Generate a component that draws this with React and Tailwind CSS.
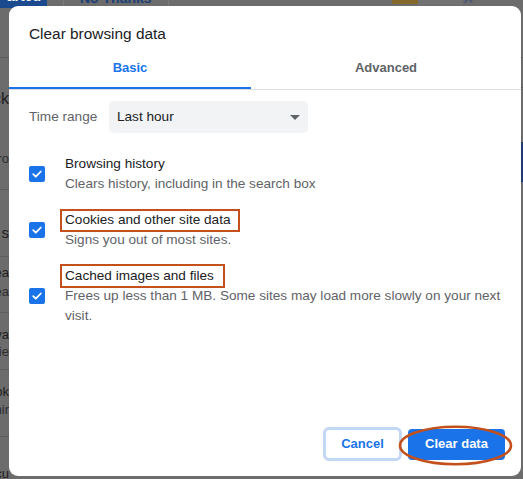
import React from "react";

function Clip({ children, className = "" }) {
  return (
    <div className={"flex justify-end overflow-hidden whitespace-nowrap " + className}>
      <span>{children}</span>
    </div>
  );
}

function Check() {
  return (
    <div className="w-[16px] h-[16px] shrink-0 rounded-[2px] bg-[#1a73e8] flex items-center justify-center">
      <svg width="12" height="12" viewBox="0 0 12 12" fill="none">
        <path d="M2.2 6.2 L4.8 8.7 L9.8 3.5" stroke="white" strokeWidth="1.8" strokeLinecap="round" strokeLinejoin="round" />
      </svg>
    </div>
  );
}

function Row({ title, children, box }) {
  return (
    <div className="flex items-center gap-[20px]">
      <Check />
      <div className="flex flex-col text-[13.6px] leading-[20px] whitespace-nowrap">
        <div className="text-[#202124]">
          <span className="relative inline-block">
            {title}
            {box}
          </span>
        </div>
        <div className="text-[#5f6368]">{children}</div>
      </div>
    </div>
  );
}

export default function App() {
  return (
    <div className="relative w-[523px] h-[479px] overflow-hidden bg-[#6c6c6c] font-['Liberation_Sans',Arial,sans-serif]">
      {/* background page (dimmed) */}
      <div className="flex flex-col w-full h-full">
        <div className="h-[58px] shrink-0 border-b border-[#5c5c5c] flex items-start">
          <div className="w-[47px] h-[22px] -mt-[14px] bg-[#1b4a8e] text-white text-[14px] font-bold flex justify-end overflow-hidden pr-[6px]">
            arted
          </div>
          <div className="w-px h-[20px] -mt-[10px] bg-[#7a7a7a] ml-[16px]" />
          <div className="-mt-[12px] ml-[16px] text-[#1c3f78] text-[14px] font-bold">No Thanks</div>
          <div className="w-px h-[20px] -mt-[10px] bg-[#7a7a7a] ml-[16px]" />
          <div className="flex-1" />
          <div className="w-[26px] h-[4px] bg-[#86692a]" />
          <div className="w-[44px] h-[5px] bg-[#727272]" />
          <div className="-mt-[12px] text-[#3f5777] text-[15px] mr-[48px]">✕</div>
        </div>
        <div className="flex flex-1">
          <div className="w-[9px] flex flex-col text-[13px] text-[#1e1e1e]">
            <div className="h-[132px] border-b border-[#5e5e5e] flex flex-col pt-[32px] gap-[42px] leading-[18px]">
              <Clip className="text-[16px]">Back</Clip>
              <Clip className="text-[#2e2e2e]">Pro</Clip>
            </div>
            <div className="h-[67px] border-b border-[#5e5e5e] pt-[34px] leading-[18px]">
              <Clip className="text-[15px]">All s</Clip>
            </div>
            <div className="h-[56px] border-b border-[#5e5e5e] pt-[6px] leading-[19px]">
              <Clip>Sea</Clip>
              <Clip className="text-[#2e2e2e]">Sea</Clip>
            </div>
            <div className="h-[57px] border-b border-[#5e5e5e] pt-[13px] leading-[17px]">
              <Clip>Priva</Clip>
              <Clip className="text-[#2e2e2e]">Revie</Clip>
            </div>
            <div className="h-[67px] border-b border-[#5e5e5e] pt-[13px] leading-[18px]">
              <Clip>Cook</Clip>
              <Clip className="text-[#2e2e2e]">Thir</Clip>
            </div>
            <div className="flex-1 pt-[28px] leading-[18px]">
              <Clip>Secu</Clip>
            </div>
          </div>
          <div className="flex-1" />
          <div className="w-[2px] flex flex-col">
            <div className="h-[30px] border-b border-[#555]" />
            <div className="h-[54px]" />
            <div className="h-[40px] bg-[#1d3d6e]" />
          </div>
        </div>
        <div className="h-[3px] bg-[#4a4a4a]" />
      </div>

      {/* dialog */}
      <div className="absolute left-[9px] top-[6px] w-[512px] h-[470px] bg-white rounded-[9px] flex flex-col">
        <div className="px-[20px] pt-[16px] text-[15.4px] leading-[24px] text-[#202124]">Clear browsing data</div>
        <div className="flex border-b border-[#dadce0] text-[13px] leading-[20px] font-bold">
          <div className="w-[242px] pt-[12px] pb-[9px] text-center text-[#1a73e8] border-b-2 border-[#1a73e8]">Basic</div>
          <div className="flex-1 pt-[12px] pb-[9px] text-center text-[#5f6368] border-b-2 border-transparent">Advanced</div>
        </div>
        <div className="flex items-center mt-[11px] px-[20px] text-[13.6px]">
          <div className="w-[80px] text-[#5f6368]">Time range</div>
          <div className="w-[199px] h-[32px] rounded-[5px] bg-[#f1f3f4] flex items-center justify-between pl-[8px] pr-[8px] text-[#202124]">
            <span>Last hour</span>
            <svg width="10" height="5" viewBox="0 0 10 5">
              <path d="M0 0 L10 0 L5 5 Z" fill="#5f6368" />
            </svg>
          </div>
        </div>
        <div className="flex flex-col gap-[16px] mt-[21px] px-[20px]">
          <Row title="Browsing history">Clears history, including in the search box</Row>
          <Row
            title="Cookies and other site data"
            box={<span className="absolute left-[-5px] right-[-9px] top-[-1px] bottom-[-2px] border-2 border-[#c4501c]" />}
          >
            Signs you out of most sites.
          </Row>
          <Row
            title="Cached images and files"
            box={<span className="absolute left-[-5px] right-[-11px] top-[-2px] bottom-[-2px] border-2 border-[#c4501c]" />}
          >
            Frees up less than 1 MB. Some sites may load more slowly on your next
            <br />
            visit.
          </Row>
        </div>
        <div className="flex-1" />
        <div className="flex justify-end items-center gap-[6px] pr-[16px] pb-[15px] text-[13px] font-bold">
          <button className="w-[79px] h-[34px] rounded-[6px] border-[3px] border-[#c3d7f7] bg-white text-[#1a73e8]">Cancel</button>
          <div className="relative">
            <button className="w-[97px] h-[31px] rounded-[4px] bg-[#1a73e8] text-white">Clear data</button>
            <svg className="absolute left-[-10px] top-[-4px]" width="115" height="41" viewBox="0 0 115 41" fill="none">
              <ellipse cx="57.5" cy="20.5" rx="55.5" ry="18.8" stroke="#c4501c" strokeWidth="2.6" />
            </svg>
          </div>
        </div>
      </div>
    </div>
  );
}
